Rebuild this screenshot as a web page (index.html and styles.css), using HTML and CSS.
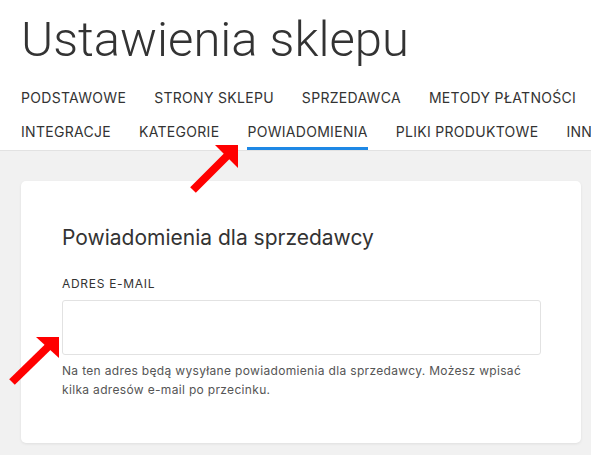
FILE: index.html
```html
<!DOCTYPE html>
<html lang="pl">
<head>
<meta charset="utf-8">
<title>Ustawienia sklepu</title>
<link rel="stylesheet" href="styles.css">
</head>
<body>
<header class="top">
  <h1 class="title">Ustawienia sklepu</h1>
  <nav class="tabs">
    <div class="tab-row">
      <a class="tab">Podstawowe</a>
      <a class="tab">Strony sklepu</a>
      <a class="tab">Sprzedawca</a>
      <a class="tab">Metody płatności</a>
    </div>
    <div class="tab-row">
      <a class="tab">Integracje</a>
      <a class="tab">Kategorie</a>
      <a class="tab active">Powiadomienia</a>
      <a class="tab">Pliki produktowe</a>
      <a class="tab">Inne</a>
    </div>
  </nav>
</header>
<main class="content">
  <section class="card">
    <h2 class="card-title">Powiadomienia dla sprzedawcy</h2>
    <label class="field-label" for="email">Adres e-mail</label>
    <input class="field-input" id="email" type="text">
    <p class="help">Na ten adres będą wysyłane powiadomienia dla sprzedawcy. Możesz wpisać kilka adresów e-mail po przecinku.</p>
  </section>
</main>
<svg class="arrow arrow-tab" width="60" height="60" viewBox="0 0 60 60">
  <line x1="8" y1="50" x2="45" y2="13" stroke="#ff0000" stroke-width="8"/>
  <polygon points="30,5 53,5 53,28" fill="#ff0000"/>
</svg>
<svg class="arrow arrow-input" width="65" height="60" viewBox="0 0 65 60">
  <line x1="12" y1="52" x2="50" y2="15" stroke="#ff0000" stroke-width="8"/>
  <polygon points="36,7 59,7 59,28" fill="#ff0000"/>
</svg>
</body>
</html>
```
FILE: styles.css
```css
html, body {
  margin: 0;
  padding: 0;
}
body {
  font-family: Inter, Roboto, "Liberation Sans", sans-serif;
  color: #333;
  background: #f1f1f1;
  height: 455px;
  overflow: hidden;
  position: relative;
}
.top {
  background: #fff;
  padding: 10px 0 0 21px;
  border-bottom: 1px solid #e2e2e2;
  overflow: hidden;
}
.title {
  margin: 0;
  font-family: Roboto, "Liberation Sans", sans-serif;
  font-size: 49px;
  line-height: 60px;
  font-weight: 300;
  color: #333;
  white-space: nowrap;
}
.tabs {
  margin-top: 12px;
}
.tab-row {
  display: flex;
  gap: 28px;
  white-space: nowrap;
}
.tab {
  display: block;
  font-size: 14px;
  line-height: 20px;
  letter-spacing: 0.3px;
  padding: 6px 0 5px;
  border-bottom: 3px solid transparent;
  text-transform: uppercase;
  color: #333;
  flex: none;
}
.tab.active {
  border-bottom-color: #1e88e5;
}
.content {
  padding: 30px 10px 0 21px;
}
.card {
  background: #fff;
  border-radius: 5px;
  box-shadow: 0 1px 3px rgba(0,0,0,0.08);
  padding: 43px 40px 44px 41px;
}
.card-title {
  margin: 0;
  font-size: 21px;
  line-height: 28px;
  font-weight: 400;
  color: #333;
}
.field-label {
  display: block;
  margin-top: 24px;
  font-size: 12px;
  line-height: 16px;
  letter-spacing: 0.7px;
  text-transform: uppercase;
  color: #333;
}
.field-input {
  display: block;
  box-sizing: border-box;
  width: 100%;
  height: 55px;
  margin-top: 8px;
  border: 1px solid #e2e2e2;
  border-radius: 3px;
  background: #fff;
  outline: none;
}
.help {
  margin: 6px 0 0;
  font-size: 12px;
  line-height: 19px;
  letter-spacing: 0.33px;
  color: #555;
}
.arrow {
  position: absolute;
}
.arrow-tab {
  left: 185px;
  top: 140px;
}
.arrow-input {
  left: 0;
  top: 330px;
}
```
